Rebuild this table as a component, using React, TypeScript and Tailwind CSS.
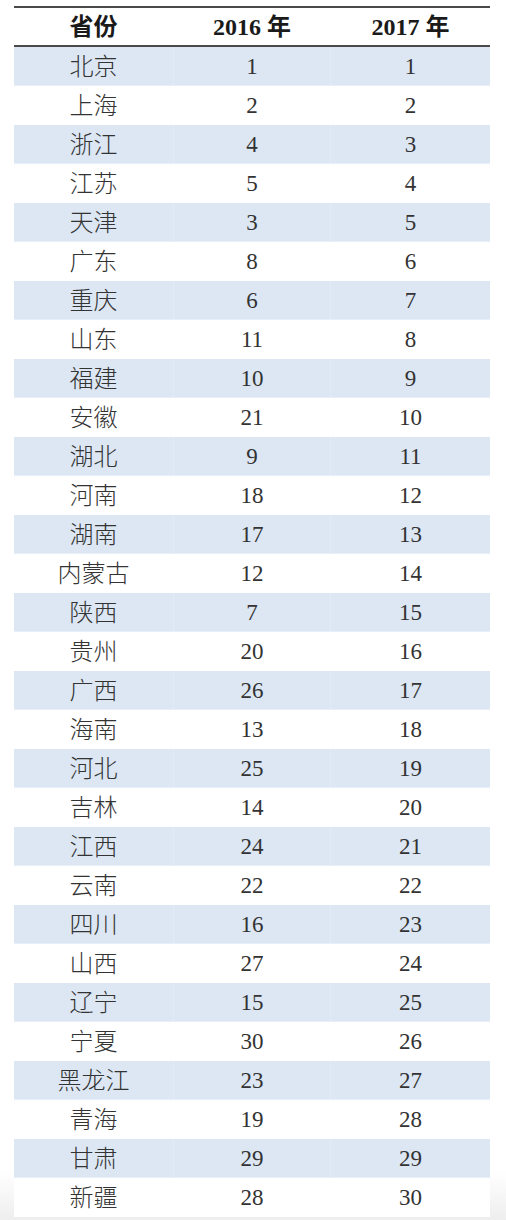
import React from "react";

const rows: [string, number, number][] = [
  ["北京", 1, 1],
  ["上海", 2, 2],
  ["浙江", 4, 3],
  ["江苏", 5, 4],
  ["天津", 3, 5],
  ["广东", 8, 6],
  ["重庆", 6, 7],
  ["山东", 11, 8],
  ["福建", 10, 9],
  ["安徽", 21, 10],
  ["湖北", 9, 11],
  ["河南", 18, 12],
  ["湖南", 17, 13],
  ["内蒙古", 12, 14],
  ["陕西", 7, 15],
  ["贵州", 20, 16],
  ["广西", 26, 17],
  ["海南", 13, 18],
  ["河北", 25, 19],
  ["吉林", 14, 20],
  ["江西", 24, 21],
  ["云南", 22, 22],
  ["四川", 16, 23],
  ["山西", 27, 24],
  ["辽宁", 15, 25],
  ["宁夏", 30, 26],
  ["黑龙江", 23, 27],
  ["青海", 19, 28],
  ["甘肃", 29, 29],
  ["新疆", 28, 30],
];

export default function App() {
  return (
    <div
      className="w-[506px] h-[1220px] overflow-hidden bg-[linear-gradient(to_bottom,#ffffff_96%,#eeeeee)] pt-[6px]"
      style={{ fontFamily: '"Liberation Serif", "Noto Sans CJK SC", serif' }}
    >
      <div className="ml-[14px] w-[476px]">
        <div className="border-t-2 border-b-2 border-[#4a4a4a] grid grid-cols-[159px_158px_159px] h-[41px] items-center text-[24px] font-bold text-[#1a1a1a]">
          <div className="text-center">省份</div>
          <div className="text-center">2016 年</div>
          <div className="text-center">2017 年</div>
        </div>
        {rows.map(([name, a, b], i) => (
          <div
            key={name}
            className={
              i % 2 === 0
                ? "grid grid-cols-[159px_158px_159px] h-[39px] items-center text-[#333333] bg-[#dce7f3] border-b border-[#e8eff8]"
                : "grid grid-cols-[159px_158px_159px] h-[39px] items-center text-[#333333] bg-white border-b border-white"
            }
          >
            <div className="text-center pt-[1px] text-[24px] font-light leading-none">{name}</div>
            <div className={i % 2 === 0 ? "text-[23px] pt-[2px] border-x border-[#e3ebf6] h-full flex items-center justify-center" : "text-[23px] pt-[2px] h-full flex items-center justify-center"}>{a}</div>
            <div className="text-center text-[23px] pt-[2px]">{b}</div>
          </div>
        ))}
      </div>
    </div>
  );
}
